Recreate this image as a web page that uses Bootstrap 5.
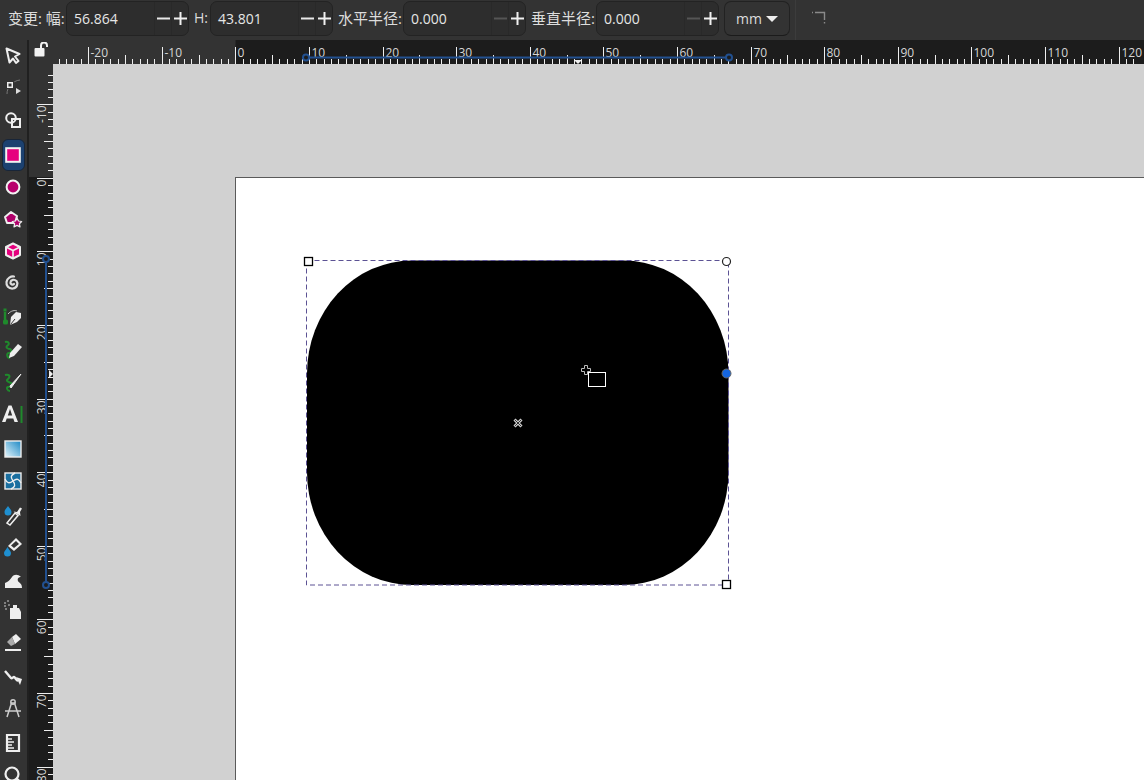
<!DOCTYPE html>
<html lang="zh">
<head>
<meta charset="utf-8">
<title>Inkscape</title>
<link href="https://cdn.jsdelivr.net/npm/bootstrap@5.3.0/dist/css/bootstrap.min.css" rel="stylesheet">
<style>
html,body{height:100%;overflow:hidden;background:#333;}
body{font-family:"Open Sans","Noto Sans CJK SC",sans-serif;font-size:14px;color:#ddd;}
.app{width:1144px;height:780px;}
.topbar{height:40px;background:#333;padding:1px 0 4px 8px;}
.lbl{white-space:nowrap;line-height:34px;font-size:15px;flex:none;}
.lbl.first{width:58px;}
.lbl.h{margin-left:5px;width:16px;font-size:14px;}
.lbl.r{margin-left:5px;width:65px;}
.spin{width:123px;height:35px;background:#2d2d2d;border:1px solid #232323;border-radius:7px;flex:none;}
.spin .val{flex:1 1 auto;padding-left:7px;color:#e6e6e6;line-height:33px;}
.stepb{width:17px;height:33px;padding:0;border:0;border-left:1px solid #292929;border-radius:0;display:flex;align-items:center;justify-content:center;}
.unitb{width:66px;height:35px;margin-left:5px;padding:0 0 0 11px;background:#333;border:1px solid #222;border-bottom-color:#1b1b1b;border-radius:7px;color:#ddd;font-size:14px;line-height:33px;flex:none;}
.vsep{width:1px;height:40px;margin:-1px 14px 0 5px;background:#3c3c3c;flex:none;}
.toolbox{width:29px;height:740px;background:#333;border-right:2px solid #202020;}
.tool{height:32px;width:26px;display:flex;align-items:center;justify-content:center;}
.tool.on{background:#1c4170;border:1px solid #182538;border-radius:6px;width:22.5px;margin-left:2px;height:32px;}
.grp{margin-top:3px;}
.grp:first-child{margin-top:0;}
.grp.tight{margin-top:1px;}
.grp.tight .tool{height:32.3px;}
.work{width:1115px;height:740px;display:grid;grid-template-columns:24px 1091px;grid-template-rows:24px 716px;}
.corner{background:#333;display:flex;align-items:center;justify-content:center;padding:0 0 6px 1px;}
.rul{display:block;background:#333;}
.rul text{font-family:"Open Sans",sans-serif;font-size:12px;fill:#d6d6d6;}
.cvs{position:relative;background:#d1d1d1;overflow:hidden;}
.cvs svg{position:absolute;left:0;top:0;}
</style>
</head>
<body>
<div class="app">
  <div class="topbar d-flex align-items-start">
    <span class="lbl first">变更: 幅:</span>
    <div class="spin d-flex"><span class="val">56.864</span>
      <button class="btn stepb" aria-label="minus"><svg width="13" height="13" viewBox="0 0 13 13"><path d="M0 6.5H13" stroke="#e8e8e8" stroke-width="2"/></svg></button>
      <button class="btn stepb" aria-label="plus"><svg width="13" height="13" viewBox="0 0 13 13"><path d="M0 6.5H13M6.5 0V13" stroke="#f0f0f0" stroke-width="2"/></svg></button></div>
    <span class="lbl h">H:</span>
    <div class="spin d-flex"><span class="val">43.801</span>
      <button class="btn stepb" aria-label="minus"><svg width="13" height="13" viewBox="0 0 13 13"><path d="M0 6.5H13" stroke="#e8e8e8" stroke-width="2"/></svg></button>
      <button class="btn stepb" aria-label="plus"><svg width="13" height="13" viewBox="0 0 13 13"><path d="M0 6.5H13M6.5 0V13" stroke="#f0f0f0" stroke-width="2"/></svg></button></div>
    <span class="lbl r">水平半径:</span>
    <div class="spin d-flex"><span class="val">0.000</span>
      <button class="btn stepb" aria-label="minus"><svg width="13" height="13" viewBox="0 0 13 13"><path d="M0 6.5H13" stroke="#555" stroke-width="2"/></svg></button>
      <button class="btn stepb" aria-label="plus"><svg width="13" height="13" viewBox="0 0 13 13"><path d="M0 6.5H13M6.5 0V13" stroke="#f0f0f0" stroke-width="2"/></svg></button></div>
    <span class="lbl r">垂直半径:</span>
    <div class="spin d-flex"><span class="val">0.000</span>
      <button class="btn stepb" aria-label="minus"><svg width="13" height="13" viewBox="0 0 13 13"><path d="M0 6.5H13" stroke="#555" stroke-width="2"/></svg></button>
      <button class="btn stepb" aria-label="plus"><svg width="13" height="13" viewBox="0 0 13 13"><path d="M0 6.5H13M6.5 0V13" stroke="#f0f0f0" stroke-width="2"/></svg></button></div>
    <button class="btn unitb d-flex align-items-center text-start">mm<svg class="ms-1" width="12" height="8" viewBox="0 0 12 8"><path d="M0 1H12L6 7Z" fill="#eee"/></svg></button>
    <div class="vsep"></div>
    <svg class="mt-2" width="16" height="18" viewBox="0 0 16 18"><path d="M2 3.5H3M5 3.5H14.5V11M14.5 13V14.5" fill="none" stroke="#8a8a8a" stroke-width="1.4"/></svg>
  </div>
  <div class="d-flex">
    <div class="toolbox" id="box">
      <div class="grp">
        <div class="tool"><svg width="20" height="20" viewBox="0 0 20 20"><path d="M3.5 2.5 16.5 8 12 10.5 15.5 15 13 17 10 12.5 6.5 16.5Z" fill="none" stroke="#eee" stroke-width="2" stroke-linejoin="round"/></svg></div>
        <div class="tool"><svg width="20" height="20" viewBox="0 0 20 20"><path d="M4 16C4 9 9 3 17 2" fill="none" stroke="#777"/><rect x="3.5" y="3.5" width="7" height="7" fill="#eee" stroke="#333"/><rect x="5.5" y="5.5" width="3" height="3" fill="#333"/><path d="M13 10 18 13 13 16Z" fill="#ddd"/></svg></div>
        <div class="tool"><svg width="20" height="20" viewBox="0 0 20 20"><rect x="9" y="9" width="8" height="8" fill="none" stroke="#eee" stroke-width="2"/><circle cx="8" cy="8" r="4.8" fill="none" stroke="#eee" stroke-width="2"/></svg></div>
      </div>
      <div class="grp">
        <div class="tool on"><svg width="16" height="16" viewBox="0 0 16 16"><rect x="1.2" y="1.2" width="13.6" height="13.6" fill="#e6007e" stroke="#f2f2f2" stroke-width="2"/></svg></div>
        <div class="tool"><svg width="16" height="16" viewBox="0 0 16 16"><circle cx="8" cy="8" r="6.4" fill="#b8006c" stroke="#f2f2f2" stroke-width="2"/></svg></div>
        <div class="tool"><svg width="20" height="20" viewBox="0 0 20 20"><path d="M8 3 14 7 12 14H4L2 8Z" fill="#b0006a" stroke="#eee" stroke-width="2" stroke-linejoin="round"/><path d="M14 9l1.5 3 3.2.5-2.3 2.2.6 3.2-3-1.5-3 1.5.6-3.2-2.3-2.2 3.2-.5Z" fill="#b0006a" stroke="#eee" stroke-width="1.2" stroke-linejoin="round"/></svg></div>
        <div class="tool"><svg width="20" height="20" viewBox="0 0 20 20"><path d="M10 2.5 17 6V14L10 17.5 3 14V6Z" fill="#e6007e" stroke="#eee" stroke-width="2" stroke-linejoin="round"/><path d="M3 6 10 9.5 17 6M10 9.5V17" fill="none" stroke="#eee" stroke-width="1.6"/></svg></div>
        <div class="tool"><svg width="20" height="20" viewBox="0 0 20 20"><path d="M11 11C9.500 12.500 7 11 7.500 9 8 6.500 11.500 6 13.500 8 15.500 10.500 14 15 10 15.500 5.500 16 3 12.500 3.500 9 4 5 8 3 11 3.500" fill="none" stroke="#ddd" stroke-width="2.2" stroke-linecap="round"/></svg></div>
      </div>
      <div class="grp">
        <div class="tool"><svg width="22" height="22" viewBox="0 0 22 22"><path d="M3 5V13" stroke="#1f8a2c" stroke-width="2.4"/><rect x="1" y="12.500" width="5" height="5" rx="1.500" fill="#1f8a2c"/><rect x="1.500" y="1.500" width="3" height="3" fill="#1f8a2c"/><path d="M6 7C9 3.500 13 3 15 4" fill="none" stroke="#bbb"/><path d="M19 6 14 5 9 10 8 18 15 15 19 11Z" fill="#eee"/><path d="M8.500 17.500 13 12" stroke="#333"/></svg></div>
        <div class="tool"><svg width="22" height="22" viewBox="0 0 22 22"><path d="M3 3C7 2 8 5 5 7 3 9 7 10 8 10 10 11 10 14 7 14 4 14 5 19 8 19" fill="none" stroke="#1f8a2c" stroke-width="2"/><path d="M8 14 16 5 20 8 12 17 7 19Z" fill="#eee"/></svg></div>
        <div class="tool"><svg width="22" height="22" viewBox="0 0 22 22"><path d="M3 4C7 3 9 5 6 8 3 10 7 11 9 12 11 13 9 16 6 16 4 16 5 20 8 20" fill="none" stroke="#1f8a2c" stroke-width="2"/><path d="M19 3 8 15 9 17Z" fill="#eee" stroke="#eee"/></svg></div>
        <div class="tool"><svg width="24" height="22" viewBox="0 0 24 22" aria-hidden="true"><path d="M1 19 7.500 2.500H10.500L17 19H13.500L12.300 15.500H5.700L4.500 19ZM6.800 12.500H11.200L9 6Z" fill="#eee"/><rect x="19.500" y="3" width="2" height="17" fill="#1f8a2c"/></svg></div>
      </div>
      <div class="grp">
        <div class="tool"><svg width="18" height="18" viewBox="0 0 18 18"><defs><linearGradient id="g1" x1="0" y1="1" x2="1" y2="0"><stop offset="0" stop-color="#e6f6fc"/><stop offset="1" stop-color="#1b88c4"/></linearGradient></defs><rect x="1" y="1" width="16" height="16" fill="url(#g1)" stroke="#eee" stroke-width="1.4"/></svg></div>
        <div class="tool"><svg width="18" height="18" viewBox="0 0 18 18"><rect x="1" y="1" width="16" height="16" fill="#1a6fa0" stroke="#eee" stroke-width="1.400"/><path d="M9 9C6 5 7 3 11 1M9 9C13 6 15 7 17 11M9 9C12 13 11 15 7 17M9 9C5 12 3 11 1 7" fill="none" stroke="#eee" stroke-width="1.400"/></svg></div>
      </div>
      <div class="grp tight">
        <div class="tool"><svg width="22" height="26" viewBox="0 0 22 26"><path d="M6 5C4 8 2.500 9 2.500 11A3.500 3.500 0 0 0 9.500 11C9.500 9 8 8 6 5Z" fill="#1f8fd0"/><path d="M5 22 13 12 16 14.500 8 24Z" fill="none" stroke="#eee" stroke-width="1.500"/><path d="M11.500 10.500 15 11 18 6.500 20 7.500 18 11 18.500 15Z" fill="#eee"/></svg></div>
        <div class="tool"><svg width="22" height="22" viewBox="0 0 22 22"><path d="M6 11 14 3 20 9 12 16Z" fill="#eee"/><path d="M9 10.500 14 6 17 9 12 13Z" fill="#333"/><path d="M5.500 12C4 15 2 16 2 18A3.500 3.500 0 0 0 9 18C9 16 7 15 5.500 12Z" fill="#1f8fd0"/></svg></div>
        <div class="tool"><svg width="22" height="22" viewBox="0 0 22 22"><path d="M3 20V15C6 14 8 12 10 9 12 6 16 6 19 9 17 9 15 10 16 13 17 15 20 15 20 20Z" fill="#eee"/></svg></div>
        <div class="tool"><svg width="22" height="22" viewBox="0 0 22 22"><path d="M8 8H17L19 12V19H8Z M11 8V5H15V8Z" fill="#eee"/><path d="M2 3h2M5 1h2M2 6h2M6 5h2M3 9h2" stroke="#999" stroke-width="1.500"/></svg></div>
        <div class="tool"><svg width="22" height="22" viewBox="0 0 22 22"><path d="M10 5 14 2 19 7 13 12Z" fill="#eee"/><path d="M10 5 5 10 9 14 13 12Z" fill="#aaa"/><rect x="3" y="17" width="16" height="2" fill="#eee"/></svg></div>
        <div class="tool"><svg width="22" height="22" viewBox="0 0 22 22"><path d="M3 6 9 13C10 14 11 12 12 12 13 12 14 15 16 16" fill="none" stroke="#eee" stroke-width="2.400"/><path d="M14 12 20 14 18 20Z" fill="#eee"/></svg></div>
        <div class="tool"><svg width="22" height="22" viewBox="0 0 22 22"><path d="M5 20 9.500 6H12.500L17 20M7 14H15M3 14H19" fill="none" stroke="#ccc" stroke-width="1.500"/><circle cx="11" cy="5" r="2.200" fill="none" stroke="#ccc" stroke-width="1.500"/></svg></div>
      </div>
      <div class="grp">
        <div class="tool"><svg width="20" height="20" viewBox="0 0 20 20"><path d="M4 2H16V18H4Z" fill="none" stroke="#eee" stroke-width="2.200"/><path d="M4 6H9M4 9H11M4 12H9M4 15H11" stroke="#eee" stroke-width="1.600"/></svg></div>
        <div class="tool"><svg width="20" height="20" viewBox="0 0 20 20"><circle cx="9" cy="9" r="6.500" fill="none" stroke="#eee" stroke-width="2.200"/><path d="M13.500 13.500 19 19" stroke="#eee" stroke-width="2.500"/></svg></div>
      </div>
    </div>
    <div class="work">
      <div class="corner"><svg width="15" height="15" viewBox="0 0 15 15"><rect x="0.500" y="6" width="10" height="8.500" rx="1" fill="#f2f2f2"/><path d="M7 6V3.500A3 3 0 0 1 13 3.500V5" fill="none" stroke="#f2f2f2" stroke-width="2"/></svg></div>
      <svg class="rul" id="hr" width="1091" height="24" viewBox="53 40 1091 24"></svg>
      <svg class="rul" id="vr" width="24" height="716" viewBox="29 64 24 716"></svg>
      <div class="cvs">
        <svg width="1091" height="716" viewBox="53 64 1091 716">
          <rect x="235.500" y="177.500" width="1000" height="800" fill="#fff" stroke="#5a5a5a"/>
          <rect x="307" y="260.500" width="421.500" height="324.500" rx="105" ry="113" fill="#000"/>
          <rect x="306.500" y="260.500" width="422" height="324.500" fill="none" stroke="#5c5294" stroke-dasharray="5 3"/>
          <rect x="304.500" y="257.500" width="8" height="8" fill="#fff" stroke="#000" stroke-width="1.300"/>
          <rect x="722.500" y="580.500" width="8" height="8" fill="#fff" stroke="#000" stroke-width="1.300"/>
          <circle cx="726.500" cy="261.500" r="4" fill="#fff" stroke="#222" stroke-width="1.200"/>
          <circle cx="726.500" cy="373.500" r="4.500" fill="#1565e0" stroke="#666"/>
          <path d="M514.500 419.500 521.500 426.500M521.500 419.500 514.500 426.500" stroke="#ccc" stroke-width="3"/>
          <path d="M515 420 521 426M521 420 515 426" stroke="#333" stroke-width="1"/>
          <path d="M584.500 365.500H587.500V368.500H590.500V371.500H587.500V374.500H584.500V371.500H581.500V368.500H584.500Z" fill="#000" stroke="#bbb"/>
          <rect x="588.500" y="372.500" width="17" height="14" fill="#000" stroke="#fff"/>
        </svg>
      </div>
    </div>
  </div>
</div>
<script>
(function(){
  var NS="http://www.w3.org/2000/svg",S=7.36;
  function el(p,n,a,t){var e=document.createElementNS(NS,n);for(var k in a)e.setAttribute(k,a[k]);if(t!==undefined)e.textContent=t;p.appendChild(e);return e;}
  var hr=document.getElementById('hr'),vr=document.getElementById('vr');
  el(hr,'rect',{x:235.5,y:40,width:1000,height:24,fill:'#1c1c1c'});
  el(vr,'rect',{x:29,y:177,width:24,height:700,fill:'#1c1c1c'});
  var x0=235.3,y0=177.8,i,p,m;
  for(i=-24;i<=122;i++){
    p=Math.round(x0+i*S)+0.5;m=((i%10)+10)%10;
    if(p<56)continue;
    var top=m==0?47:(m==5?55:59);
    el(hr,'path',{d:'M'+p+' '+top+'V64',stroke:'#eee',fill:'none'});
    if(m==0)el(hr,'text',{x:p+2,y:57},String(i));
  }
  for(i=-14;i<=81;i++){
    p=Math.round(y0+i*S)+0.5;m=((i%10)+10)%10;
    if(p<68)continue;
    var left=m==0?37:(m==5?44:48);
    el(vr,'path',{d:'M'+left+' '+p+'H53',stroke:'#eee',fill:'none'});
    if(m==0)el(vr,'text',{transform:'translate(45.500 '+(p+1)+') rotate(-90)','text-anchor':'end',x:0,y:0},String(i));
  }
  el(hr,'path',{d:'M306 57.500H729',stroke:'#22508f',"stroke-width":2});
  el(hr,'circle',{cx:306,cy:57.5,r:3,fill:'#1c1c1c',stroke:'#22508f',"stroke-width":2});
  el(hr,'circle',{cx:729,cy:57.5,r:3,fill:'#1c1c1c',stroke:'#22508f',"stroke-width":2});
  el(hr,'path',{d:'M574 60H582L578 64Z',fill:'#eee'});
  el(vr,'path',{d:'M46 259V585',stroke:'#22508f',"stroke-width":2});
  el(vr,'circle',{cx:46,cy:259,r:3,fill:'#1c1c1c',stroke:'#22508f',"stroke-width":2});
  el(vr,'circle',{cx:46,cy:585,r:3,fill:'#1c1c1c',stroke:'#22508f',"stroke-width":2});
  el(vr,'path',{d:'M49 370V378L53 374Z',fill:'#eee'});
})();
</script>
<script src="https://cdn.jsdelivr.net/npm/bootstrap@5.3.0/dist/js/bootstrap.bundle.min.js"></script>
</body>
</html>
